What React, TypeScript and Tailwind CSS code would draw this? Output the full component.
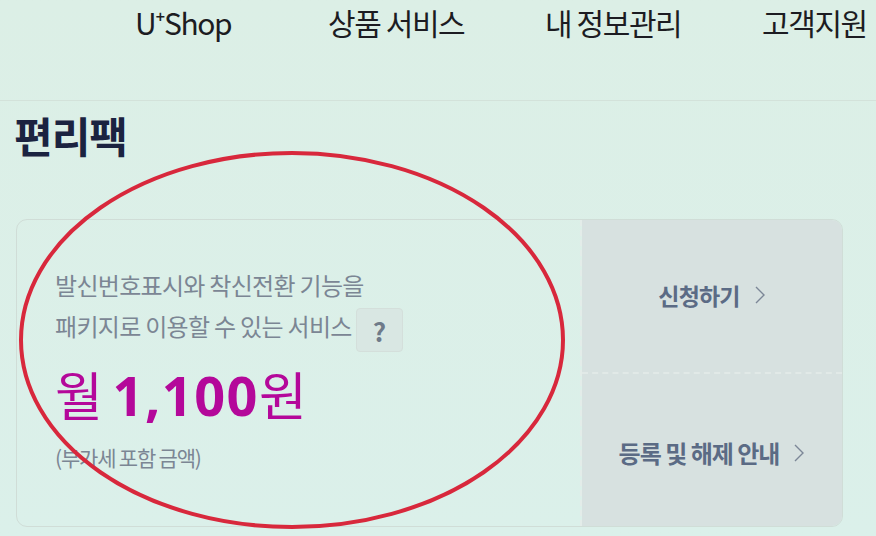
const nav = ["U⁺Shop", "상품 서비스", "내 정보관리", "고객지원"]

function Chevron() {
  return (
    <svg width="12" height="20" viewBox="0 0 12 20" className="ml-[14px]" fill="none">
      <path d="M2 2l8 8-8 8" stroke="#7c8797" strokeWidth="1.4" />
    </svg>
  )
}

export default function App() {
  return (
    <div
      className="relative h-[536px] w-[876px] overflow-hidden bg-gradient-to-b from-[#dcefe6] to-[#dbf0ea]"
      style={{ fontFamily: '"Noto Sans CJK KR", "Noto Sans", sans-serif' }}
    >
      <nav className="h-[101px] border-b border-[#d3e2da] pl-[135px]">
        <div className="grid grid-cols-[193px_217px_217px_auto] text-[30px] leading-[44px] tracking-[-1.4px] text-[#1c1c22]">
          {nav.map((item) => (
            <span key={item} className="whitespace-nowrap">{item}</span>
          ))}
        </div>
      </nav>

      <h1 className="ml-[14px] mt-[8px] text-[42px] font-bold leading-[52px] tracking-[-1px] text-[#1b2340]">편리팩</h1>

      <div className="ml-[16px] mt-[58px] flex h-[308px] w-[827px] overflow-hidden rounded-[11px] border border-[#d0ddd7]">
        <div className="flex-1 border-r-2 border-dashed border-[#e3ece9] pl-[38px] pt-[44px]">
          <p className="text-[24px] leading-[41px] tracking-[-0.7px] text-[#7b8694]">
            발신번호표시와 착신전환 기능을
            <br />
            패키지로 이용할 수 있는 서비스
            <span className="ml-[4px] inline-flex h-[44px] w-[47px] translate-y-[1px] items-center justify-center rounded-[4px] border border-[#d4dfdb] bg-[#d9e7e3] align-middle text-[26px] font-semibold text-[#6f7b8a]">
              ?
            </span>
          </p>
          <p className="mt-[12px] text-[#b4089a] leading-[62px]">
            <span className="text-[52px] tracking-[-1px]">월 </span>
            <span className="text-[54px] font-bold tracking-[1.5px]" style={{ fontFamily: '"Open Sans", sans-serif' }}>1,100</span>
            <span className="text-[52px]">원</span>
          </p>
          <p className="mt-[2px] text-[21px] tracking-[-1.2px] text-[#7b8694]">(부가세 포함 금액)</p>
        </div>
        <div className="flex w-[260px] flex-col bg-[#d7e1e0]">
          <button className="flex h-[154px] items-center justify-center border-b-2 border-dashed border-[#e1e9e7] pb-[2px] text-[23px] font-bold tracking-[-0.8px] text-[#5b6b85]">
            신청하기
            <Chevron />
          </button>
          <button className="flex flex-1 items-center justify-center pt-[6px] text-[24px] font-bold tracking-[-1px] text-[#5b6b85]">
            등록 및 해제 안내
            <Chevron />
          </button>
        </div>
      </div>

      <svg className="pointer-events-none absolute left-0 top-0" width="876" height="536">
        <ellipse cx="292" cy="340" rx="271" ry="187" fill="none" stroke="#d8283c" strokeWidth="4" />
      </svg>
    </div>
  )
}
